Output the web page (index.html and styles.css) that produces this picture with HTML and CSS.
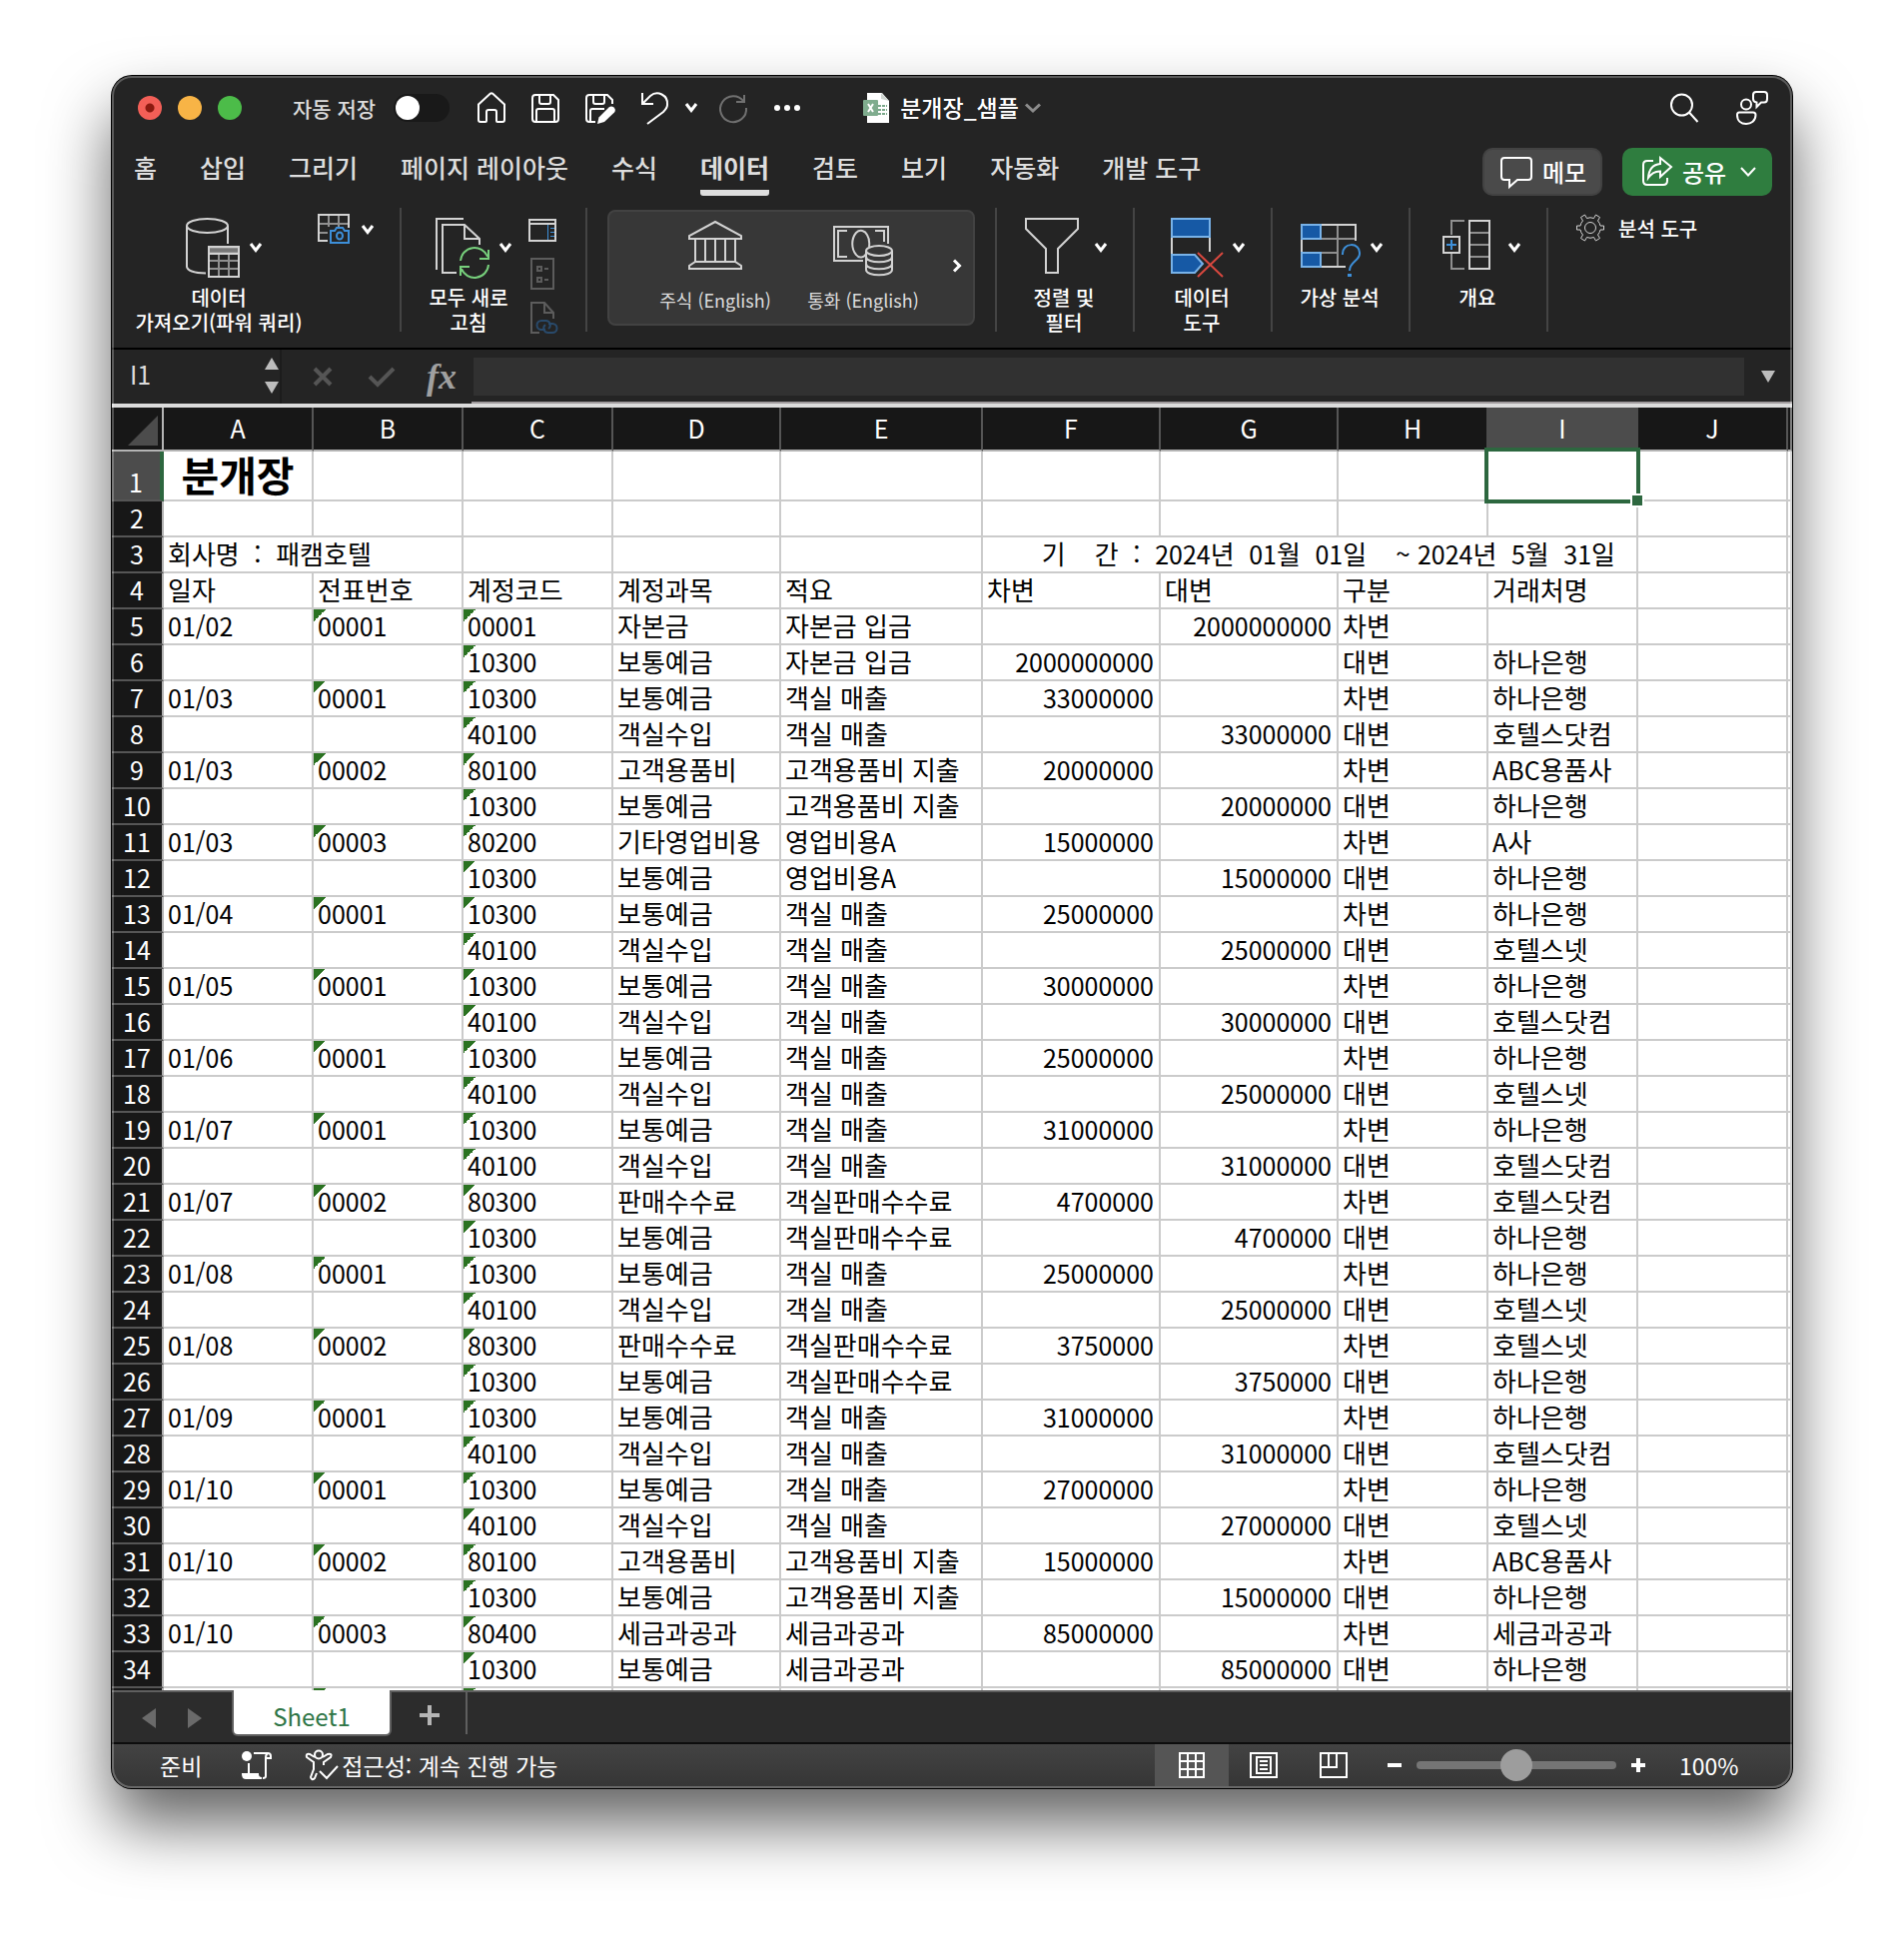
FILE: index.html
```html
<!DOCTYPE html>
<html lang="ko">
<head>
<meta charset="utf-8">
<title>분개장_샘플</title>
<link rel="stylesheet" href="styles.css">
</head>
<body>
<main class="window">
  <header class="titlebar">
    <div class="lights">
      <button class="light light-close" aria-label="닫기"></button>
      <button class="light light-min" aria-label="최소화"></button>
      <button class="light light-max" aria-label="최대화"></button>
    </div>
    <label class="autosave">자동 저장 <input type="checkbox" class="toggle"></label>
    <div class="quick">
      <button aria-label="홈"><svg width="28" height="32" viewBox="0 0 28 32"><path d="M1 12.5L13 1.6Q14 .8 15 1.6L27 12.5V28Q27 30 25 30H20Q19 30 19 29V20Q19 18 17 18H11Q9 18 9 20V29Q9 30 8 30H3Q1 30 1 28Z"/></svg></button>
      <button aria-label="저장"><svg width="28" height="32" viewBox="0 0 28 32"><path d="M4 3H22L27 8V27Q27 30 24 30H4Q1 30 1 27V6Q1 3 4 3ZM8 3V10Q8 12 10 12H17Q19 12 19 10V3M5 30V19Q5 17 7 17H21Q23 17 23 19V30"/></svg></button>
      <button aria-label="다른 이름으로 저장"><svg width="30" height="32" viewBox="0 0 30 32"><path d="M10 30H4Q1 30 1 27V6Q1 3 4 3H22L27 8V12M8 3V10Q8 12 10 12H17Q19 12 19 10V3M5 30V19Q5 17 7 17H19"/><path class="solid" d="M23.500 15.500Q26 13.500 28.500 15.500Q31 18 29 20.500L19 30L12 32L13.500 25.500Z"/></svg></button>
      <button aria-label="실행 취소"><svg width="28" height="34" viewBox="0 0 28 34"><path d="M1 2V13H12M1 13L9 5C16 -1 27 4 26 14C26 17 24 19 22 21L6 33"/></svg></button>
      <button class="undo-more" aria-label="실행 취소 목록"><svg class="bold" width="12" height="10" viewBox="0 0 12 10"><path d="M1 1L6 7.500L11 1"/></svg></button>
      <button class="redo" aria-label="다시 실행"><svg width="28" height="32" viewBox="0 0 28 32"><path d="M25 3V10H17M24.500 9.500A13 13 0 1 0 27 16"/></svg></button>
      <button class="more" aria-label="더 보기"><svg width="28" height="8" viewBox="0 0 28 8"><g class="solid"><circle cx="4" cy="4" r="3"/><circle cx="14" cy="4" r="3"/><circle cx="24" cy="4" r="3"/></g></svg></button>
    </div>
    <button class="doc">
      <svg width="27" height="30" viewBox="0 0 27 30"><path fill="#fff" stroke="none" d="M4 0H19L26 8V30H4Z"/><path fill="#cfd6d2" stroke="none" d="M18 0L26 8L18 6Z"/><path stroke="#7ba98b" stroke-width="2" d="M15 13H24M15 17H24M15 21H24" stroke-dasharray="3 1"/><rect y="7" width="15" height="16" rx="1" fill="#7fac8e" stroke="none"/><path stroke="#fff" d="M5 11L10 19M10 11L5 19"/></svg>
      <span>분개장_샘플</span>
      <svg class="doc-more" width="16" height="10" viewBox="0 0 16 10"><path d="M1 1.500L8 8L15 1.500"/></svg>
    </button>
    <div class="title-right">
      <button aria-label="검색"><svg width="28" height="30" viewBox="0 0 28 30"><circle cx="11.500" cy="12" r="10.500"/><path d="M19 19.500L27.500 29"/></svg></button>
      <button aria-label="공동 작업"><svg width="32" height="34" viewBox="0 0 32 34"><circle cx="10" cy="13.500" r="5"/><path d="M3 21.500H17Q19.500 21.500 19.500 24C19.500 30 15 33 10 33S1 30 1 24Q1 21.500 3 21.500ZM20 1H28Q31 1 31 4V8Q31 11.500 28 11.500H25L20.500 16V11.500Q17 11 17 8V4Q17 1 20 1Z"/></svg></button>
    </div>
  </header>

  <nav class="tabs">
    <a href="#">홈</a><a href="#">삽입</a><a href="#">그리기</a><a href="#">페이지 레이아웃</a><a href="#">수식</a><a href="#" class="active">데이터</a><a href="#">검토</a><a href="#">보기</a><a href="#">자동화</a><a href="#">개발 도구</a>
    <div class="tab-actions">
      <button class="memo"><svg width="32" height="32" viewBox="0 0 32 32"><path d="M4 2H28Q31 2 31 5V21Q31 24 28 24H17L9 31V24H4Q1 24 1 21V5Q1 2 4 2Z"/></svg>메모</button>
      <button class="share"><svg width="30" height="30" viewBox="0 0 30 30"><path d="M11 4H5Q1 4 1 8V24Q1 28 5 28H21Q25 28 25 24V21M18 1L29 10L18 20V14.500Q11 14 6 21Q7 8 18 7Z"/></svg>공유<svg class="share-more" width="16" height="10" viewBox="0 0 16 10"><path d="M1 1L8 8.500L15 1"/></svg></button>
    </div>
  </nav>

  <section class="ribbon">
    <div class="group group-get">
      <button class="tool tool-wide">
        <span class="tool-icon"><svg width="64" height="60" viewBox="0 0 64 60"><path d="M48 26V8M7 8V49Q8 55 26 55.500"/><ellipse cx="27.500" cy="8" rx="20.500" ry="7"/><path class="mid" fill="#777" d="M29 30H59V35H29Z"/><path class="mid" d="M39 36V59M49 36V59M29 43H59M29 51H59"/><path d="M29 29H59V59H29ZM29 36H59"/></svg><svg class="bold" width="12" height="10" viewBox="0 0 12 10"><path d="M1 1L6 7.500L11 1"/></svg></span>
        데이터<br>가져오기(파워 쿼리)
      </button>
      <button class="tool-small" aria-label="그림에서 데이터"><svg width="34" height="32" viewBox="0 0 34 32"><path class="mid" d="M11 1V13M21 1V13M1 10H31M1 19H10"/><path d="M10 27H1V1H31V14"/><path class="blue" d="M13 17H17L19 14H25L27 17H31V29H13Z"/><ellipse class="blue" cx="22" cy="22" rx="3" ry="3.500"/></svg><svg class="bold" width="12" height="10" viewBox="0 0 12 10"><path d="M1 1L6 7.500L11 1"/></svg></button>
    </div>
    <div class="group group-refresh">
      <button class="tool tool-mid">
        <span class="tool-icon"><svg width="64" height="60" viewBox="0 0 64 60"><path d="M34 1H7V52M27 55H13V7H35L50 21V27M35 7V21H50"/><path class="green" d="M31 43A14 14 0 0 1 58 39M59 32V41H50M59 47A14 14 0 0 1 32 51M31 58V49H40"/></svg><svg class="bold" width="12" height="10" viewBox="0 0 12 10"><path d="M1 1L6 7.500L11 1"/></svg></span>
        모두 새로<br>고침
      </button>
      <div class="stack">
        <button aria-label="쿼리 및 연결"><svg width="30" height="32" viewBox="0 0 30 32"><path d="M1 6H27V27H1ZM1 10H27"/><path class="blue thin" d="M19.500 11V26M22 14.500H26M22 18.500H26M22 22.500H26"/></svg></button>
        <button aria-label="속성" disabled><svg width="30" height="32" viewBox="0 0 30 32"><path class="dim" d="M3 1H25V31H3ZM9 9H13V13H9ZM9 20H13V24H9ZM16 11H20M16 22H20"/></svg></button>
        <button aria-label="링크 편집" disabled><svg width="30" height="32" viewBox="0 0 30 32"><path class="dim" d="M11 31H3V1H16L25 11V17M16 1V11H25"/><path class="navy" d="M17 28H13A4.500 4.500 0 0 1 13 19H18A4.500 4.500 0 0 1 20 27M20 22H24A4.500 4.500 0 0 1 24 31H20A4.500 4.500 0 0 1 17 23"/></svg></button>
      </div>
    </div>
    <div class="group group-types">
      <div class="gallery">
        <button><svg width="60" height="56" viewBox="-3 0 60 56"><path d="M1 19V16L27 2L53 16V19ZM7 19V42M17 19V42M27 19V42M37 19V42M47 19V42M7 42H47L53 46V49H1V46Z"/></svg>주식 (English)</button>
        <button><svg width="60" height="56" viewBox="0 0 60 56"><path d="M30 41H1V7H55V24M14 11H5V37H14M42 11H51V22M33 34C31 38 26 39 23 35C18 29 18 19 23 13C27 9 32 11 34 15Q37 20 36 27"/><ellipse cx="46" cy="31" rx="13" ry="5"/><path d="M33 31V50C33 57 59 57 59 50V31M33 37C33 44 59 44 59 37M33 44C33 51 59 51 59 44"/></svg>통화 (English)</button>
        <button class="gallery-next" aria-label="다음"><svg class="bold" width="8" height="14" viewBox="0 0 8 14"><path d="M1 1.500L6.500 7L1 12.500"/></svg></button>
      </div>
    </div>
    <div class="group">
      <button class="tool">
        <span class="tool-icon"><svg width="64" height="60" viewBox="0 0 64 60"><path d="M1 1H53V11L33 31V55H21V31L1 11Z"/></svg><svg class="bold" width="12" height="10" viewBox="0 0 12 10"><path d="M1 1L6 7.500L11 1"/></svg></span>
        정렬 및<br>필터
      </button>
    </div>
    <div class="group">
      <button class="tool">
        <span class="tool-icon"><svg width="64" height="60" viewBox="0 0 64 60"><path d="M9 20V37M47 20V34"/><path class="cell" d="M9 1H47V19H9ZM9 37H32L40 46L32 55H9Z"/><path class="red" d="M35 35L60 59M60 35L35 59"/></svg><svg class="bold" width="12" height="10" viewBox="0 0 12 10"><path d="M1 1L6 7.500L11 1"/></svg></span>
        데이터<br>도구
      </button>
    </div>
    <div class="group">
      <button class="tool">
        <span class="tool-icon"><svg width="64" height="60" viewBox="0 0 64 60"><path class="mid" d="M20 21H55M20 35H38M37 7V49"/><path d="M20 7H55V23M1 21V35M20 49H45"/><path class="cell" d="M1 7H20V21H1ZM1 35H20V49H1Z"/><path class="blue" d="M42 37C41 24 60 24 59 36C59 43 49 44 49 53"/><path class="blue" stroke-width="4" d="M49 56V59"/></svg><svg class="bold" width="12" height="10" viewBox="0 0 12 10"><path d="M1 1L6 7.500L11 1"/></svg></span>
        가상 분석
      </button>
    </div>
    <div class="group">
      <button class="tool">
        <span class="tool-icon"><svg width="64" height="60" viewBox="0 0 64 60"><path class="mid" d="M26 3H13V17M13 36V51H26M31 15H51M31 27H51M31 39H51"/><path d="M31 3H51V51H31ZM5 19H21V35H5Z"/><path class="blue" d="M8 27H18M13 22V32"/></svg><svg class="bold" width="12" height="10" viewBox="0 0 12 10"><path d="M1 1L6 7.500L11 1"/></svg></span>
        개요
      </button>
    </div>
    <div class="group group-analysis">
      <button class="analysis"><svg width="28" height="28" viewBox="0 0 28 28"><path d="M8.500 1L10.500 4.500Q14 3 17.500 4.500L19.500 1L23.500 3.500L21.500 7Q23.500 9 24 12H27.500V16H24Q23.500 19 21.500 21L23.500 24.500L19.500 27L17.500 23.500Q14 25 10.500 23.500L8.500 27L4.500 24.500L6.500 21Q4.500 19 4 16H.5V12H4Q4.500 9 6.500 7L4.500 3.500Z"/><circle cx="14" cy="14" r="5.500"/></svg>분석 도구</button>
    </div>
  </section>

  <section class="formula">
    <div class="namebox">
      <input type="text" value="I1" aria-label="이름 상자">
      <button aria-label="이름 목록"><svg width="14" height="36" viewBox="0 0 14 36"><path fill="#bdbdbd" stroke="none" d="M0 12L7 0L14 12ZM0 24H14L7 36Z"/></svg></button>
    </div>
    <div class="formula-tools">
      <button aria-label="취소"><svg width="20" height="20" viewBox="0 0 20 20"><path d="M2 2L18 18M18 2L2 18"/></svg></button>
      <button aria-label="입력"><svg width="28" height="20" viewBox="0 0 28 20"><path d="M2 10L10 18L26 2"/></svg></button>
      <button class="fx" aria-label="함수 삽입">fx</button>
    </div>
    <div class="formula-main">
      <input type="text" aria-label="수식 입력줄">
      <button aria-label="수식 입력줄 확장"><svg width="14" height="12" viewBox="0 0 14 12"><path fill="#bdbdbd" stroke="none" d="M0 0H14L7 12Z"/></svg></button>
    </div>
  </section>

  <table class="sheet">
    <colgroup><col class="w-head"><col class="w-std"><col class="w-std"><col class="w-std"><col class="w-d"><col class="w-e"><col class="w-num"><col class="w-num"><col class="w-std"><col class="w-std"><col class="w-std"><col></colgroup>
    <thead>
      <tr><th class="corner"><svg width="30" height="30" viewBox="0 0 30 30"><path fill="#4c4c4c" stroke="none" d="M30 0V30H0Z"/></svg><th>A<th>B<th>C<th>D<th>E<th>F<th>G<th>H<th class="sel">I<th>J<th></tr>
    </thead>
    <tbody>
      <tr class="first"><th class="sel">1<td class="title">분개장<td><td><td><td><td><td><td><td class="cursor"><span class="cursor-box"></span><td><td></tr>
      <tr><th>2<td><td><td><td><td><td><td><td><td><td><td></tr>
      <tr><th>3<td colspan="2" class="company">회사명  :  패캠호텔<td><td><td><td colspan="4" class="period">기    간  :  <i>2024</i>년  <i>01</i>월  <i>01</i>일    ~ <i>2024</i>년  <i>5</i>월  <i>31</i>일<td><td></tr>
      <tr class="heads"><th>4<td>일자<td>전표번호<td>계정코드<td>계정과목<td>적요<td>차변<td>대변<td>구분<td>거래처명<td><td></tr>
      <tr><th>5<td>01/02<td class="e">00001<td class="e">00001<td>자본금<td>자본금 입금<td><td>2000000000<td>차변<td><td><td></tr>
      <tr><th>6<td><td><td class="e">10300<td>보통예금<td>자본금 입금<td>2000000000<td><td>대변<td>하나은행<td><td></tr>
      <tr><th>7<td>01/03<td class="e">00001<td class="e">10300<td>보통예금<td>객실 매출<td>33000000<td><td>차변<td>하나은행<td><td></tr>
      <tr><th>8<td><td><td class="e">40100<td>객실수입<td>객실 매출<td><td>33000000<td>대변<td>호텔스닷컴<td><td></tr>
      <tr><th>9<td>01/03<td class="e">00002<td class="e">80100<td>고객용품비<td>고객용품비 지출<td>20000000<td><td>차변<td><i>ABC</i>용품사<td><td></tr>
      <tr><th>10<td><td><td class="e">10300<td>보통예금<td>고객용품비 지출<td><td>20000000<td>대변<td>하나은행<td><td></tr>
      <tr><th>11<td>01/03<td class="e">00003<td class="e">80200<td>기타영업비용<td>영업비용<i>A</i><td>15000000<td><td>차변<td><i>A</i>사<td><td></tr>
      <tr><th>12<td><td><td class="e">10300<td>보통예금<td>영업비용<i>A</i><td><td>15000000<td>대변<td>하나은행<td><td></tr>
      <tr><th>13<td>01/04<td class="e">00001<td class="e">10300<td>보통예금<td>객실 매출<td>25000000<td><td>차변<td>하나은행<td><td></tr>
      <tr><th>14<td><td><td class="e">40100<td>객실수입<td>객실 매출<td><td>25000000<td>대변<td>호텔스넷<td><td></tr>
      <tr><th>15<td>01/05<td class="e">00001<td class="e">10300<td>보통예금<td>객실 매출<td>30000000<td><td>차변<td>하나은행<td><td></tr>
      <tr><th>16<td><td><td class="e">40100<td>객실수입<td>객실 매출<td><td>30000000<td>대변<td>호텔스닷컴<td><td></tr>
      <tr><th>17<td>01/06<td class="e">00001<td class="e">10300<td>보통예금<td>객실 매출<td>25000000<td><td>차변<td>하나은행<td><td></tr>
      <tr><th>18<td><td><td class="e">40100<td>객실수입<td>객실 매출<td><td>25000000<td>대변<td>호텔스넷<td><td></tr>
      <tr><th>19<td>01/07<td class="e">00001<td class="e">10300<td>보통예금<td>객실 매출<td>31000000<td><td>차변<td>하나은행<td><td></tr>
      <tr><th>20<td><td><td class="e">40100<td>객실수입<td>객실 매출<td><td>31000000<td>대변<td>호텔스닷컴<td><td></tr>
      <tr><th>21<td>01/07<td class="e">00002<td class="e">80300<td>판매수수료<td>객실판매수수료<td>4700000<td><td>차변<td>호텔스닷컴<td><td></tr>
      <tr><th>22<td><td><td class="e">10300<td>보통예금<td>객실판매수수료<td><td>4700000<td>대변<td>하나은행<td><td></tr>
      <tr><th>23<td>01/08<td class="e">00001<td class="e">10300<td>보통예금<td>객실 매출<td>25000000<td><td>차변<td>하나은행<td><td></tr>
      <tr><th>24<td><td><td class="e">40100<td>객실수입<td>객실 매출<td><td>25000000<td>대변<td>호텔스넷<td><td></tr>
      <tr><th>25<td>01/08<td class="e">00002<td class="e">80300<td>판매수수료<td>객실판매수수료<td>3750000<td><td>차변<td>호텔스넷<td><td></tr>
      <tr><th>26<td><td><td class="e">10300<td>보통예금<td>객실판매수수료<td><td>3750000<td>대변<td>하나은행<td><td></tr>
      <tr><th>27<td>01/09<td class="e">00001<td class="e">10300<td>보통예금<td>객실 매출<td>31000000<td><td>차변<td>하나은행<td><td></tr>
      <tr><th>28<td><td><td class="e">40100<td>객실수입<td>객실 매출<td><td>31000000<td>대변<td>호텔스닷컴<td><td></tr>
      <tr><th>29<td>01/10<td class="e">00001<td class="e">10300<td>보통예금<td>객실 매출<td>27000000<td><td>차변<td>하나은행<td><td></tr>
      <tr><th>30<td><td><td class="e">40100<td>객실수입<td>객실 매출<td><td>27000000<td>대변<td>호텔스넷<td><td></tr>
      <tr><th>31<td>01/10<td class="e">00002<td class="e">80100<td>고객용품비<td>고객용품비 지출<td>15000000<td><td>차변<td><i>ABC</i>용품사<td><td></tr>
      <tr><th>32<td><td><td class="e">10300<td>보통예금<td>고객용품비 지출<td><td>15000000<td>대변<td>하나은행<td><td></tr>
      <tr><th>33<td>01/10<td class="e">00003<td class="e">80400<td>세금과공과<td>세금과공과<td>85000000<td><td>차변<td>세금과공과<td><td></tr>
      <tr><th>34<td><td><td class="e">10300<td>보통예금<td>세금과공과<td><td>85000000<td>대변<td>하나은행<td><td></tr>
      <tr class="cut"><th><td><td class="e"><td class="e"><td><td><td><td><td><td><td><td></tr>
    </tbody>
  </table>

  <nav class="sheetbar">
    <button aria-label="이전 시트"><svg width="14" height="20" viewBox="0 0 14 20"><path fill="#6a6a6a" stroke="none" d="M14 0V20L0 10Z"/></svg></button>
    <button class="sheet-next" aria-label="다음 시트"><svg width="14" height="20" viewBox="0 0 14 20"><path fill="#6a6a6a" stroke="none" d="M0 0V20L14 10Z"/></svg></button>
    <button class="sheet-tab">Sheet1</button>
    <button class="sheet-add" aria-label="새 시트"><svg width="20" height="20" viewBox="0 0 20 20"><path stroke="#b5b5b5" stroke-width="4" d="M0 10H20M10 0V20"/></svg></button>
  </nav>

  <footer class="status">
    <span class="ready">준비</span>
    <button class="macro" aria-label="매크로 기록"><svg width="30" height="30" viewBox="0 0 30 30"><circle cx="5" cy="6" r="5" fill="#fff" stroke="none"/><path d="M12 3H26Q29 3 29 6V8H24M24 8V26Q24 28 21 28M26 3Q24 4 24 8M7 13V23"/><path fill="#fff" d="M1 24H16Q16 28 20 28H4Q1 28 1 24Z"/></svg></button>
    <button class="access"><svg width="33" height="32" viewBox="0 0 33 32"><circle cx="13" cy="5.500" r="4"/><path d="M9 8L4 5Q0 4 1 8L8 13V20L5 28Q6 32 9 29L11 24M17 8L22 5Q27 4 25 8L18 13V16M14 22L21 29L32 17"/></svg>접근성: 계속 진행 가능</button>
    <div class="views">
      <button class="on" aria-label="기본"><svg width="28" height="28" viewBox="0 0 28 28"><path d="M2 2H26V26H2ZM10 2V26M18 2V26M2 10H26M2 18H26"/></svg></button>
      <button aria-label="페이지 레이아웃"><svg width="28" height="28" viewBox="0 0 28 28"><path d="M1 2H27V26H1ZM7 6H21V22H7ZM10 10H18M10 14H18M10 18H18"/></svg></button>
      <button aria-label="페이지 나누기 미리 보기"><svg width="28" height="28" viewBox="0 0 28 28"><path d="M1 2H27V26H1ZM1 16H17V2M9 2V16"/></svg></button>
    </div>
    <div class="zoom">
      <button aria-label="축소"><svg width="16" height="16" viewBox="0 0 16 16"><path d="M1 8H15"/></svg></button>
      <input type="range" min="0" max="200" value="100" aria-label="확대/축소">
      <button aria-label="확대"><svg width="16" height="16" viewBox="0 0 16 16"><path d="M1 8H15M8 1V15"/></svg></button>
      <output>100%</output>
    </div>
  </footer>
</main>
</body>
</html>
```

FILE: styles.css
```css
*, *::before, *::after { box-sizing: border-box; }

body {
  margin: 0;
  padding: 76px 112px 148px;
  background: #fff;
  color: #fff;
  font: 20px/25px "Noto Sans CJK KR", "Noto Sans", sans-serif;
}

button, input {
  margin: 0;
  padding: 0;
  border: 0;
  background: none;
  color: inherit;
  font: inherit;
}
button { display: flex; align-items: center; flex: none; }
svg { flex: none; display: block; overflow: visible; fill: none; stroke: #fff; stroke-width: 2; }
svg .solid { fill: #fff; stroke: none; }
svg.bold { stroke-width: 3; }

.window {
  position: relative;
  overflow: clip;
  overflow-clip-margin: 160px;
  border-radius: 20px;
  background: #242424;
  box-shadow: 0 0 0 1px #000, 0 36px 64px rgba(0, 0, 0, .62);
}
/* light rim inside the window edge */
.window::after {
  content: "";
  position: absolute;
  inset: 0;
  z-index: 5;
  border: 2px solid rgba(255, 255, 255, .25);
  border-radius: 20px;
  pointer-events: none;
}

/* title bar */
.titlebar { display: flex; align-items: center; height: 64px; padding: 0 24px 0 26px; }
.lights { display: flex; gap: 16px; }
.light { width: 24px; height: 24px; border-radius: 50%; }
.light-close { background: radial-gradient(circle, #8c1a10 0 4px, #f35f57 5px); }
.light-min { background: #f8b446; }
.light-max { background: #4cbc49; }
.autosave { display: flex; align-items: center; gap: 18px; margin-left: 51px; font-size: 21px; font-weight: 500; color: #dcdcdc; }
.toggle { appearance: none; width: 56px; height: 28px; padding: 2px; border-radius: 14px; background: #191919; }
.toggle::before { content: ""; display: block; width: 24px; height: 24px; border-radius: 50%; background: #fff; }
.quick { display: flex; align-items: center; gap: 26px; margin-left: 28px; }
.quick .undo-more { margin-left: -10px; }
.quick .redo { margin-left: -4px; opacity: .35; }
.doc { margin-left: 62px; font-size: 23px; font-weight: 500; gap: 10px; }
.doc span { padding-bottom: 2px; }
.doc-more { margin-left: -4px; stroke: #8c8c8c; stroke-width: 3; }
.title-right { display: flex; align-items: center; gap: 38px; margin-left: auto; }

/* ribbon tabs */
.tabs { display: flex; gap: 43px; height: 60px; padding: 8px 20px 4px 22px; font-size: 25px; line-height: 38px; font-weight: 500; }
.tabs a { color: #dedede; text-decoration: none; white-space: nowrap; border-bottom: 6px solid transparent; height: 48px; }
.tabs .active { font-weight: 700; background: linear-gradient(#dedede, #dedede) bottom / 100% 6px no-repeat; background-origin: border-box; background-clip: border-box; border-radius: 3px; }
.tab-actions { display: flex; gap: 20px; margin-left: auto; }
.tab-actions button { height: 48px; border-radius: 10px; font-weight: 500; font-size: 24px; }
.memo { width: 120px; padding-left: 16px; gap: 10px; background: #4a4a4a; border: 2px solid #424242; }
.share { width: 150px; padding-left: 20px; gap: 10px; background: #2f7d3f; }
.share .share-more { margin-left: 4px; }

/* ribbon */
.ribbon { display: flex; height: 150px; padding-top: 8px; border-bottom: 2px solid #000; }
.ribbon svg { stroke: #d2d2d2; }
.ribbon svg.bold { stroke: #fff; }
.ribbon .mid { stroke: #8f8f8f; }
.ribbon .dim { stroke: #5c5c5c; }
.ribbon .blue { stroke: #3d8fd9; }
.ribbon .thin { stroke-width: 1; }
.ribbon .navy { stroke: #294a6b; }
.ribbon .green { stroke: #77d07c; }
.ribbon .red { stroke: #d9483f; }
.ribbon .cell { fill: #1659a5; stroke: #78b2e8; }
.group { display: flex; align-items: flex-start; flex: none; width: 138px; height: 124px; border-right: 2px solid #444; }
.tool { display: block; width: 134px; padding-top: 10px; text-align: center; font-weight: 500; white-space: nowrap; }
.tool-icon { display: flex; align-items: center; justify-content: center; gap: 6px; padding-left: 4px; margin-bottom: 7px; height: 60px; }
.group-get { width: 290px; padding-left: 18px; }
.tool-wide { width: 178px; }
.tool-small { gap: 10px; margin: 6px 0 0 10px; }
.group-refresh { width: 186px; padding-left: 7px; }
.tool-mid { width: 120px; }
.stack { display: flex; flex-direction: column; gap: 12px; margin-top: 6px; }
.group-types { width: 410px; padding: 2px 0 0 20px; }
.gallery { display: flex; align-items: center; width: 368px; height: 116px; padding: 0 12px 4px 32px; border: 2px solid #424242; border-radius: 8px; background: #373737; font-size: 18px; color: #dcdcdc; }
.gallery button { flex-direction: column; width: 148px; gap: 12px; white-space: nowrap; }
.gallery .gallery-next { width: 8px; margin-left: 16px; }
.group-analysis { flex: 1; border: 0; padding-left: 28px; }
.analysis { gap: 14px; margin-top: 6px; font-weight: 500; height: 28px; }
.analysis svg { stroke-width: 1; }

/* formula bar */
.formula { display: flex; height: 54px; }
.namebox { display: flex; align-items: center; width: 170px; padding: 0 1px 2px 18px; border-right: 2px solid #1c1c1c; font-size: 25px; }
.namebox input { flex: 1; min-width: 0; height: 40px; padding-bottom: 4px; color: #dcdcdc; }
.formula-tools { display: flex; align-items: center; width: 190px; padding-left: 31px; gap: 35px; }
.formula-tools svg { stroke: #555; stroke-width: 4; }
.formula-tools .fx { font: italic 700 36px/36px "Liberation Serif", serif; color: #a0a0a0; margin-left: -4px; }
.formula-main { display: flex; align-items: center; flex: 1; padding: 6px 17px 4px 2px; gap: 17px; border-bottom: 2px solid #a09b9d; }
.formula-main input { flex: 1; height: 38px; background: #313131; }

/* worksheet */
.sheet { width: 100%; table-layout: fixed; border-collapse: separate; border-spacing: 0; border-top: 4px solid #dcdcdc; background: #fff; color: #000; line-height: 32px; font-size: 25px; }
.w-head { width: 52px; }
.w-std { width: 150px; }
.w-d { width: 168px; }
.w-e { width: 202px; }
.w-num { width: 178px; }
.sheet th, .sheet td { height: 36px; padding: 0 4px 2px; border: solid #cbcbcb; border-width: 0 2px 2px 0; white-space: pre; }
.sheet td { text-align: left; }
.sheet th { padding: 0 0 2px; background: #171717; color: #fff; font-weight: 400; border-color: #555; }
.sheet thead th { height: 44px; border-bottom-color: #b4b4b4; }
.sheet tbody th { border-right-color: #b4b4b4; }
.sheet thead .corner { padding: 6px 4px 2px 16px; border-right-color: #b4b4b4; }
.sheet thead .sel { background: #4c4c4c; border-right-color: #4c4c4c; box-shadow: -2px 0 #4c4c4c; }
.sheet tbody .sel { background: #4c4c4c; border-right: 4px solid #2d673f; }
.sheet td:nth-child(n+5), .heads td { font-size: 26px; }
.sheet td:nth-child(7), .sheet td:nth-child(8) { font-size: 25px; text-align: right; padding-right: 5px; }
.sheet .heads td { font-size: 26px; text-align: left; }
.sheet i { font-style: normal; font-size: 25px; }
.first th, .first td { height: 50px; vertical-align: bottom; }
.sheet .title { font-size: 41px; line-height: 44px; font-weight: 700; text-align: center; padding: 0 0 4px; }
.sheet .company, .sheet .period { font-size: 26px; }
.sheet .period { text-align: right; padding-right: 21px; }
.e { background: linear-gradient(135deg, #2a7221 50%, transparent 50%) 0 0 / 12px 12px no-repeat; }
.sheet .cut th, .sheet .cut td { height: 2px; padding: 0; border-bottom: 0; line-height: 0; }
.cursor { position: relative; }
.cursor-box { position: absolute; inset: -4px; z-index: 2; border: 4px solid #2d673f; }
.cursor-box::after { content: ""; position: absolute; right: -8px; bottom: -8px; width: 14px; height: 14px; border: 2px solid #fff; background: #2d673f; }

/* sheet tabs */
.sheetbar { display: flex; align-items: flex-start; height: 52px; padding-left: 30px; border-top: 2px solid #5f5f5f; background: #2c2c2c; }
.sheetbar > button { margin-top: 16px; }
.sheetbar .sheet-next { margin-left: 32px; }
.sheetbar .sheet-tab { justify-content: center; width: 160px; height: 46px; margin: -2px 0 0 30px; padding-top: 6px; border: 2px solid #5f5f5f; border-top: 0; border-radius: 0 0 6px 6px; background: #fff; color: #2e7546; font-size: 24px; }
.sheetbar .sheet-add { margin: 0; padding: 4px 26px 0 28px; height: 42px; border-right: 2px solid #5f5f5f; }

/* status bar */
.status { display: flex; align-items: center; height: 46px; padding: 0 0 2px 48px; border-top: 2px solid #0d0d0d; border-radius: 0 0 20px 20px; background: linear-gradient(#434343, #353535); font-size: 23px; white-space: nowrap; }
.macro { margin-left: 40px; }
.access { gap: 3px; margin-left: 34px; }
.views { display: flex; align-self: stretch; margin-left: auto; }
.views button { width: 70px; justify-content: center; }
.views .on { width: 74px; background: #555; }
.zoom { display: flex; align-items: center; gap: 14px; margin-left: 18px; width: 406px; }
.zoom svg { stroke-width: 4; }
.zoom output { margin-left: 19px; }
.zoom input { appearance: none; width: 200px; height: 32px; }
.zoom input::-webkit-slider-runnable-track { height: 8px; border-radius: 4px; background: #757575; }
.zoom input::-webkit-slider-thumb { appearance: none; width: 32px; height: 32px; margin-top: -12px; border-radius: 50%; background: #9d9d9d; }
```
